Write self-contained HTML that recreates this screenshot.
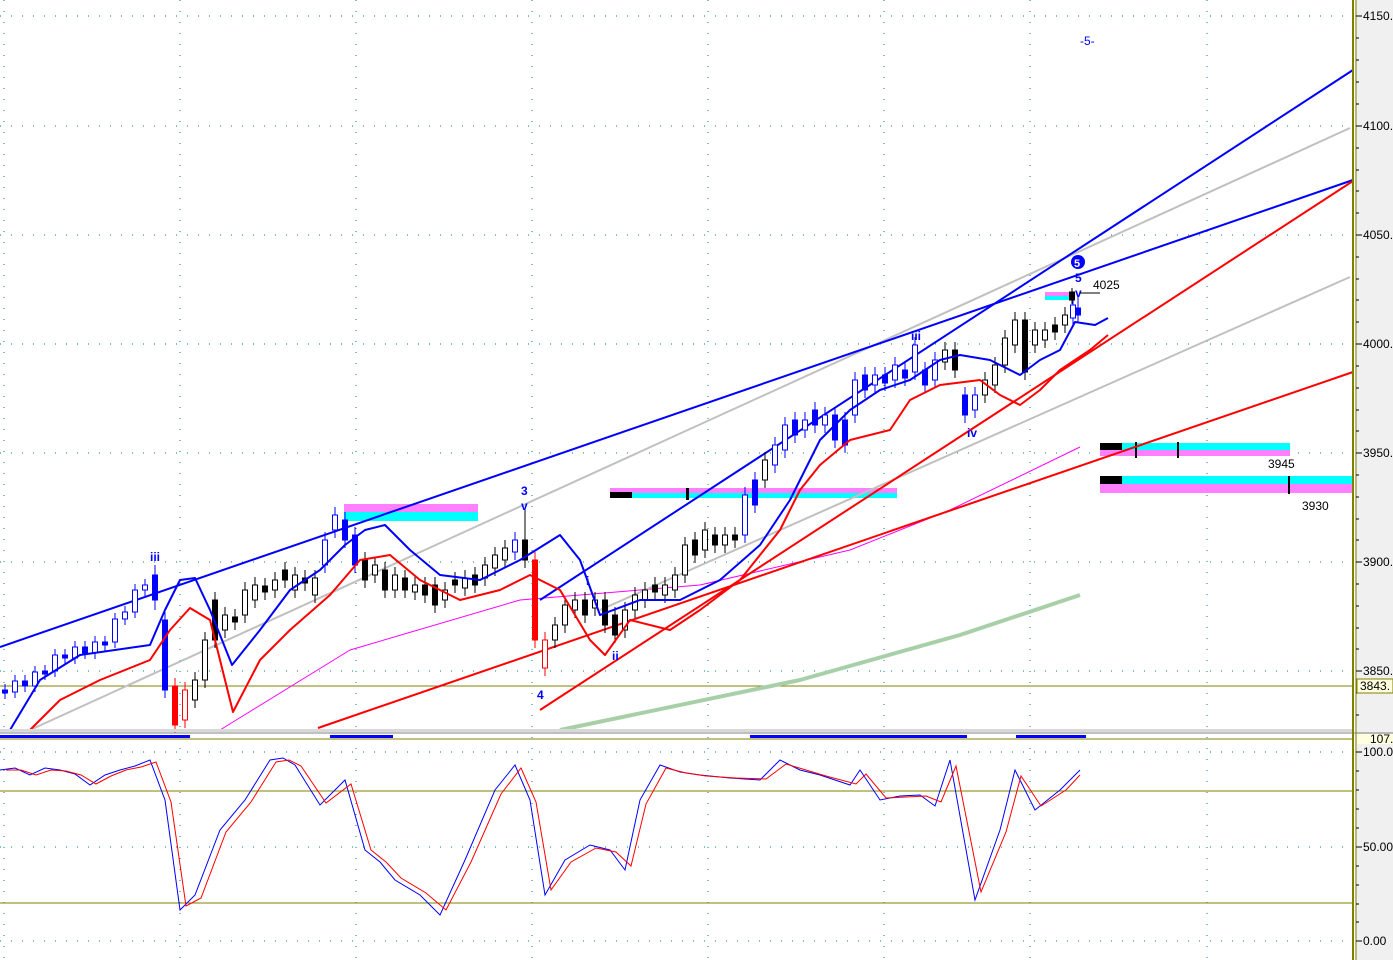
<!DOCTYPE html>
<html><head><meta charset="utf-8"><style>
html,body{margin:0;padding:0;background:#fff;overflow:hidden}
svg{display:block;font-family:"Liberation Sans",sans-serif}
</style></head><body>
<svg width="1393" height="960" xmlns="http://www.w3.org/2000/svg">
<rect width="1393" height="960" fill="#fff"/>
<rect x="1355" y="0" width="38" height="960" fill="#f0f0f0"/>
<g stroke="#008080" stroke-dasharray="1,10">
<line x1="0" y1="16" x2="1353" y2="16"/><line x1="0" y1="126" x2="1353" y2="126"/><line x1="0" y1="235" x2="1353" y2="235"/><line x1="0" y1="344" x2="1353" y2="344"/><line x1="0" y1="453" x2="1353" y2="453"/><line x1="0" y1="562" x2="1353" y2="562"/><line x1="0" y1="671" x2="1353" y2="671"/><line x1="0" y1="752" x2="1353" y2="752"/><line x1="0" y1="847" x2="1353" y2="847"/><line x1="0" y1="941" x2="1353" y2="941"/>
<line x1="4" y1="0" x2="4" y2="960"/><line x1="180" y1="0" x2="180" y2="960"/><line x1="356" y1="0" x2="356" y2="960"/><line x1="532" y1="0" x2="532" y2="960"/><line x1="708" y1="0" x2="708" y2="960"/><line x1="884" y1="0" x2="884" y2="960"/><line x1="1030" y1="0" x2="1030" y2="960"/><line x1="1207" y1="0" x2="1207" y2="960"/>
</g>
<rect x="344" y="504" width="134" height="8" fill="#ff80ff"/><rect x="344" y="512" width="134" height="9" fill="#00ffff"/>
<rect x="610" y="488" width="287" height="5" fill="#ff80ff"/><rect x="610" y="493" width="287" height="5" fill="#00ffff"/><rect x="610" y="492" width="22" height="6" fill="#000"/><rect x="686" y="488" width="3" height="12" fill="#000"/>
<rect x="1100" y="443" width="190" height="7" fill="#00ffff"/><rect x="1100" y="450" width="190" height="6" fill="#ff80ff"/><rect x="1100" y="443" width="22" height="7" fill="#000"/><rect x="1135" y="442" width="2" height="16" fill="#000"/><rect x="1177" y="442" width="2" height="16" fill="#000"/>
<rect x="1100" y="476" width="252" height="8" fill="#00ffff"/><rect x="1100" y="484" width="252" height="9" fill="#ff80ff"/><rect x="1100" y="476" width="22" height="8" fill="#000"/><rect x="1288" y="476" width="2" height="18" fill="#000"/>
<rect x="1045" y="292" width="30" height="4" fill="#ff80ff"/><rect x="1045" y="296" width="30" height="4" fill="#00ffff"/>
<g fill="none" stroke-linejoin="round">
<line x1="0" y1="686" x2="1353" y2="686" stroke="#808000"/>
<polyline points="560,730 800,680 960,635 1080,595" stroke="#a8d0a8" stroke-width="4"/>
<polyline points="220,730 350,650 520,600 700,585 850,550 950,510 1080,447" stroke="#ff00ff"/>
<line x1="30" y1="730" x2="1350" y2="128" stroke="#c0c0c0" stroke-width="2"/>
<line x1="600" y1="610" x2="1350" y2="277" stroke="#c0c0c0" stroke-width="2"/>
<line x1="0" y1="647" x2="1353" y2="180" stroke="#0000ff" stroke-width="2"/>
<line x1="540" y1="600" x2="1353" y2="70" stroke="#0000ff" stroke-width="2"/>
<line x1="318" y1="728" x2="1353" y2="372" stroke="#ff0000" stroke-width="2"/>
<line x1="540" y1="710" x2="1353" y2="181" stroke="#ff0000" stroke-width="2"/>
</g>
<!-- blue candles -->
<g stroke="#0000ff" stroke-width="1">
<path d="M5 684V699M15 675V698M25 675V692M35 666V692M45 665V680M55 649V677M65 649V664M75 641V664M85 641V659M95 636V659M105 636V651M115 613V648M125 606V625M135 584V618M145 579V596M155 565V610M165 612V698M325 532V573M335 507V538M345 512V548M355 527V573M515 532V560M745 487V543M755 472V513M775 437V473M785 417V458M795 412V443M805 412V438M815 402V433M825 407V433M835 407V448M845 412V453M855 372V423M865 367V398M875 367V393M885 367V391M895 357V388M905 362V386M915 337V380M925 362V393M935 352V388M965 387V423M975 387V418M1073 297V326M1078 297V323"/>
<g fill="#0000ff"><rect x="2.5" y="690" width="5" height="3"/><rect x="22.5" y="681" width="5" height="5"/><rect x="42.5" y="671" width="5" height="3"/><rect x="62.5" y="655" width="5" height="3"/><rect x="82.5" y="647" width="5" height="6"/><rect x="102.5" y="642" width="5" height="3"/><rect x="152.5" y="575" width="5" height="25"/><rect x="162.5" y="620" width="5" height="70"/><rect x="342.5" y="520" width="5" height="20"/><rect x="352.5" y="535" width="5" height="30"/><rect x="752.5" y="480" width="5" height="25"/><rect x="792.5" y="420" width="5" height="15"/><rect x="812.5" y="410" width="5" height="15"/><rect x="832.5" y="415" width="5" height="25"/><rect x="842.5" y="420" width="5" height="25"/><rect x="862.5" y="375" width="5" height="15"/><rect x="882.5" y="375" width="5" height="8"/><rect x="902.5" y="370" width="5" height="8"/><rect x="922.5" y="370" width="5" height="15"/><rect x="962.5" y="395" width="5" height="20"/><rect x="1075.5" y="308" width="5" height="7"/></g>
<g fill="#fff"><rect x="12.5" y="681" width="5" height="11"/><rect x="32.5" y="672" width="5" height="14"/><rect x="52.5" y="655" width="5" height="16"/><rect x="72.5" y="647" width="5" height="11"/><rect x="92.5" y="642" width="5" height="11"/><rect x="112.5" y="619" width="5" height="23"/><rect x="122.5" y="612" width="5" height="7"/><rect x="132.5" y="590" width="5" height="22"/><rect x="142.5" y="585" width="5" height="5"/><rect x="322.5" y="540" width="5" height="25"/><rect x="332.5" y="515" width="5" height="15"/><rect x="512.5" y="540" width="5" height="12"/><rect x="742.5" y="495" width="5" height="40"/><rect x="772.5" y="445" width="5" height="20"/><rect x="782.5" y="425" width="5" height="25"/><rect x="802.5" y="420" width="5" height="10"/><rect x="822.5" y="415" width="5" height="10"/><rect x="852.5" y="380" width="5" height="35"/><rect x="872.5" y="375" width="5" height="10"/><rect x="892.5" y="365" width="5" height="15"/><rect x="912.5" y="345" width="5" height="27"/><rect x="932.5" y="360" width="5" height="20"/><rect x="972.5" y="395" width="5" height="15"/><rect x="1070.5" y="305" width="5" height="13"/></g>
</g>
<!-- red candles -->
<g stroke="#ff0000">
<path d="M175 678V733M185 682V728M535 552V648M545 632V676"/>
<rect x="172.5" y="686" width="5" height="39" fill="#ff0000"/><rect x="532.5" y="560" width="5" height="80" fill="#ff0000"/>
<rect x="182.5" y="690" width="5" height="30" fill="#fff"/><rect x="542.5" y="640" width="5" height="28" fill="#fff"/>
</g>
<!-- black candles -->
<g stroke="#000">
<path d="M195 672V708M205 632V688M215 592V648M225 607V638M235 609V630M245 582V623M255 577V608M265 578V600M275 572V598M285 562V588M295 567V598M305 570V591M315 570V603M365 552V588M375 557V583M385 562V598M395 567V598M405 570V598M415 577V600M425 577V603M435 577V613M445 582V608M455 572V593M465 570V596M475 567V593M485 557V586M495 547V576M505 540V568M525 510V568M555 617V648M565 597V633M575 592V618M585 592V623M595 592V616M605 592V633M615 607V643M625 602V638M635 587V618M645 582V608M655 577V600M665 577V603M675 567V598M685 537V583M695 532V563M705 522V558M715 527V553M725 527V553M735 527V548M765 452V488M945 342V370M955 342V378M985 372V403M995 357V393M1005 330V373M1015 312V353M1025 312V380M1035 322V353M1045 322V348M1055 317V340M1065 307V333M1072 288V304"/>
<g fill="#000"><rect x="212.5" y="600" width="5" height="40"/><rect x="232.5" y="617" width="5" height="5"/><rect x="262.5" y="586" width="5" height="6"/><rect x="282.5" y="570" width="5" height="10"/><rect x="302.5" y="578" width="5" height="5"/><rect x="362.5" y="560" width="5" height="20"/><rect x="382.5" y="570" width="5" height="20"/><rect x="402.5" y="578" width="5" height="12"/><rect x="422.5" y="585" width="5" height="10"/><rect x="432.5" y="585" width="5" height="20"/><rect x="452.5" y="580" width="5" height="5"/><rect x="472.5" y="575" width="5" height="10"/><rect x="522.5" y="540" width="5" height="20"/><rect x="582.5" y="600" width="5" height="15"/><rect x="602.5" y="600" width="5" height="25"/><rect x="612.5" y="615" width="5" height="20"/><rect x="652.5" y="585" width="5" height="7"/><rect x="692.5" y="540" width="5" height="15"/><rect x="712.5" y="535" width="5" height="10"/><rect x="732.5" y="535" width="5" height="5"/><rect x="952.5" y="350" width="5" height="20"/><rect x="1022.5" y="320" width="5" height="52"/><rect x="1052.5" y="325" width="5" height="7"/><rect x="1069.5" y="292" width="5" height="8"/></g>
<g fill="#fff"><rect x="192.5" y="680" width="5" height="20"/><rect x="202.5" y="640" width="5" height="40"/><rect x="222.5" y="615" width="5" height="15"/><rect x="242.5" y="590" width="5" height="25"/><rect x="252.5" y="585" width="5" height="15"/><rect x="272.5" y="580" width="5" height="10"/><rect x="292.5" y="575" width="5" height="15"/><rect x="312.5" y="578" width="5" height="17"/><rect x="372.5" y="565" width="5" height="10"/><rect x="392.5" y="575" width="5" height="15"/><rect x="412.5" y="585" width="5" height="7"/><rect x="442.5" y="590" width="5" height="10"/><rect x="462.5" y="578" width="5" height="10"/><rect x="482.5" y="565" width="5" height="13"/><rect x="492.5" y="555" width="5" height="13"/><rect x="502.5" y="548" width="5" height="12"/><rect x="552.5" y="625" width="5" height="15"/><rect x="562.5" y="605" width="5" height="20"/><rect x="572.5" y="600" width="5" height="10"/><rect x="592.5" y="600" width="5" height="8"/><rect x="622.5" y="610" width="5" height="20"/><rect x="632.5" y="595" width="5" height="15"/><rect x="642.5" y="590" width="5" height="10"/><rect x="662.5" y="585" width="5" height="10"/><rect x="672.5" y="575" width="5" height="15"/><rect x="682.5" y="545" width="5" height="30"/><rect x="702.5" y="530" width="5" height="20"/><rect x="722.5" y="535" width="5" height="10"/><rect x="762.5" y="460" width="5" height="20"/><rect x="942.5" y="350" width="5" height="12"/><rect x="982.5" y="380" width="5" height="15"/><rect x="992.5" y="365" width="5" height="20"/><rect x="1002.5" y="338" width="5" height="27"/><rect x="1012.5" y="320" width="5" height="25"/><rect x="1032.5" y="330" width="5" height="15"/><rect x="1042.5" y="330" width="5" height="10"/><rect x="1062.5" y="315" width="5" height="10"/></g>
</g>
<g fill="none" stroke-linejoin="round" stroke-width="2">
<polyline stroke="#0000ff" points="10,730 40,680 80,655 150,645 165,610 180,580 195,578 210,610 232,665 260,630 290,590 320,570 345,545 365,530 385,525 410,550 440,575 480,580 520,560 560,535 580,560 600,615 640,600 680,600 720,580 760,545 790,500 820,440 850,410 880,390 910,380 940,360 960,355 990,360 1020,375 1040,360 1060,350 1075,322 1095,325 1108,318"/>
<polyline stroke="#ff0000" points="30,730 60,700 100,680 150,660 170,630 190,608 210,620 233,712 260,660 290,630 330,595 360,560 390,555 420,580 460,600 500,590 530,575 560,590 590,640 605,655 630,620 670,630 700,610 740,580 780,530 800,490 820,465 850,440 890,430 910,400 940,385 980,380 1000,395 1020,405 1040,390 1060,370 1090,350 1108,335"/>
</g>
<rect x="0" y="729" width="1353" height="3" fill="#d8d8d8"/>
<line x1="0" y1="733" x2="1393" y2="733" stroke="#808080"/>
<g fill="#0000ff"><rect x="0" y="735" width="190" height="3"/><rect x="330" y="735" width="63" height="3"/><rect x="750" y="735" width="217" height="3"/><rect x="1016" y="735" width="70" height="3"/></g>
<line x1="0" y1="739" x2="1353" y2="739" stroke="#808000"/>
<line x1="0" y1="791" x2="1353" y2="791" stroke="#808000"/>
<line x1="0" y1="903" x2="1353" y2="903" stroke="#808000"/>
<g fill="none">
<polyline stroke="#0000ff" points="0,770 15,768 30,775 45,768 60,770 75,774 90,785 105,775 120,770 135,766 150,760 165,800 180,910 195,895 220,830 245,800 270,760 283,758 295,765 320,805 345,780 365,850 380,862 395,880 420,895 440,915 465,860 495,790 515,765 530,800 545,895 565,860 590,845 610,850 625,870 640,800 660,765 680,772 700,775 730,778 760,780 780,760 800,770 820,775 850,785 860,770 880,800 900,796 920,795 935,806 950,760 975,900 1000,830 1015,770 1035,810 1060,790 1080,770"/>
<polyline stroke="#ff0000" points="6,770 21,770 36,775 51,770 66,771 81,775 96,784 111,776 126,770 141,767 156,762 171,802 186,906 201,898 226,832 251,802 276,762 289,760 301,766 326,803 351,784 371,850 386,862 401,878 426,893 446,910 471,862 501,794 521,768 536,802 551,890 571,862 596,848 616,852 631,866 646,804 666,768 686,773 706,776 736,778 766,779 786,764 806,770 826,776 856,784 866,774 886,798 906,797 926,796 941,802 956,766 981,892 1006,832 1021,776 1041,806 1066,790 1080,775"/>
</g>
<line x1="1353" y1="0" x2="1353" y2="960" stroke="#808000" stroke-width="2"/>
<line x1="1356" y1="0" x2="1356" y2="960" stroke="#808000"/>
<g stroke="#000"><path d="M1356 16h6M1356 126h6M1356 235h6M1356 344h6M1356 453h6M1356 562h6M1356 671h6M1356 752h6M1356 847h6M1356 941h6"/>
<path d="M1356 38h3M1356 60h3M1356 82h3M1356 104h3M1356 148h3M1356 170h3M1356 191h3M1356 213h3M1356 257h3M1356 279h3M1356 300h3M1356 322h3M1356 366h3M1356 388h3M1356 410h3M1356 431h3M1356 475h3M1356 497h3M1356 519h3M1356 540h3M1356 584h3M1356 606h3M1356 628h3M1356 649h3M1356 693h3M1356 715h3M1356 771h3M1356 790h3M1356 809h3M1356 828h3M1356 866h3M1356 885h3M1356 904h3M1356 922h3"/></g>
<g font-size="12" fill="#000">
<text x="1363" y="20">4150.</text><text x="1363" y="130">4100.</text><text x="1363" y="239">4050.</text><text x="1363" y="348">4000.</text><text x="1363" y="457">3950.</text><text x="1363" y="566">3900.</text><text x="1363" y="675">3850.</text><text x="1363" y="756">100.0</text><text x="1363" y="851">50.00</text><text x="1363" y="945">0.00</text>
</g>
<rect x="1357" y="679" width="36" height="14" fill="#ffffe0" stroke="#808000"/>
<text x="1360" y="690" font-size="12">3843.</text>
<rect x="1357" y="734" width="36" height="10" fill="#ffffe0"/>
<text x="1370" y="743" font-size="12">107.</text>
<g font-size="12" fill="#0000ff" font-weight="bold">
<text x="150" y="561">iii</text><text x="521" y="495">3</text><text x="521" y="510">v</text><text x="537" y="699">4</text>
<text x="586" y="585">i</text><text x="612" y="660">ii</text><text x="911" y="340">iii</text><text x="967" y="437">iv</text>
<text x="1075" y="282">5</text><text x="1075" y="297">v</text><text x="1080" y="45" font-weight="normal">-5-</text>
</g>
<circle cx="1078" cy="262" r="7" fill="#0000ff"/><text x="1074" y="267" font-size="11" fill="#fff" font-weight="bold">5</text>
<line x1="1080" y1="293" x2="1100" y2="293" stroke="#000"/>
<g font-size="12" fill="#000"><text x="1093" y="289">4025</text><text x="1268" y="468">3945</text><text x="1302" y="510">3930</text></g>
</svg>
</body></html>
